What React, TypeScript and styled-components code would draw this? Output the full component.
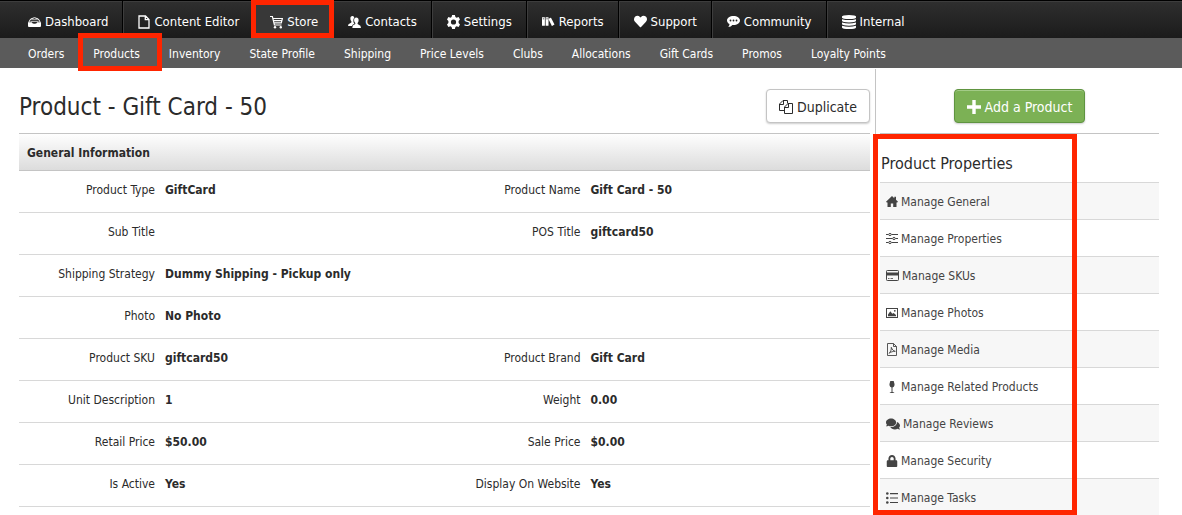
import React from 'react';
import styled, { createGlobalStyle, css } from 'styled-components';
import { FaHeart, FaComments, FaLock } from 'react-icons/fa';
import { ImBooks } from 'react-icons/im';

const Global = createGlobalStyle`
  * { box-sizing: border-box; }
  html, body { margin: 0; padding: 0; }
  body {
    background: #fff;
    color: #2b2b2b;
    font-family: Tahoma, "DejaVu Sans Condensed", "DejaVu Sans", sans-serif;
    font-stretch: condensed;
    font-size: 12px;
    line-height: 18px;
  }
  a { color: inherit; text-decoration: none; }
  svg { display: block; flex: none; }
`;

const RED = '#ff2500';

const marked = css`
  position: relative;
  z-index: 2;
  &::after {
    content: '';
    position: absolute;
    border: 5px solid ${RED};
    pointer-events: none;
  }
`;

const MainNav = styled.nav`
  display: flex;
  height: 38px;
  padding-left: 13px;
  border-top: 1px solid #000;
  background: linear-gradient(#2f2f2f, #1b1b1b);
  box-shadow: inset 0 1px #3d3d3d;
`;

const MainLink = styled.a<{ $active?: boolean }>`
  display: flex;
  align-items: center;
  gap: 4px;
  padding: 4px 14px 0 15px;
  color: #fff;
  font-size: 13px;
  white-space: nowrap;
  border-right: 1px solid #000;
  box-shadow: 1px 0 #3d3d3d;
  &:last-child { border-right: 0; box-shadow: none; }
  ${p => p.$active && css`
    ${marked}
    background: #383838;
    &::after { inset: -1px -2px 0 -3px; }
  `}
`;

const SubNav = styled.nav`
  display: flex;
  height: 30px;
  padding-left: 13px;
  background: #5b5b5b;
`;

const SubLink = styled.a<{ $active?: boolean }>`
  display: flex;
  align-items: center;
  padding: 2px 14px 0 15px;
  color: #fff;
  white-space: nowrap;
  ${p => p.$active && css`
    ${marked}
    &::after { inset: -5px -8px -3px 0; }
  `}
`;

const Page = styled.div`
  display: grid;
  grid-template-columns: minmax(0, 1fr) 284px;
  column-gap: 5px;
  padding: 1px 23px 0 19px;
`;

const Main = styled.main``;

const TitleBar = styled.header`
  display: flex;
  align-items: center;
  justify-content: space-between;
  height: 64px;
  padding-top: 10px;
`;

const Title = styled.h1`
  margin: 0;
  padding-top: 2px;
  font-size: 24px;
  line-height: 32px;
  font-weight: 400;
`;

const Button = styled.button<{ $primary?: boolean }>`
  display: flex;
  align-items: center;
  gap: 4px;
  height: 34px;
  padding: 2px 12px 0;
  border: 1px solid #c4c4c4;
  border-radius: 4px;
  background: #fff;
  color: #2b2b2b;
  font: inherit;
  font-size: 14px;
  box-shadow: 0 1px 2px rgba(0, 0, 0, 0.2);
  ${p => p.$primary && css`
    border-color: #5f9440;
    background: #7cb155;
    color: #fff;
    box-shadow: inset 0 1px #a3cb87, 0 1px 2px rgba(0, 0, 0, 0.2);
  `}
`;

const SectionTitle = styled.h2`
  margin: 0;
  padding: 10px 8px 8px;
  border: solid #c4c4c4;
  border-width: 1px 0;
  background: linear-gradient(#fefefe, #dcdcdc);
  font-size: 12px;
  line-height: 18px;
  font-weight: 700;
`;

const Details = styled.dl`
  margin: 0;
`;

const DetailRow = styled.div`
  display: grid;
  grid-template-columns: 1fr 1fr;
  height: 42px;
  border-bottom: 1px solid #d8d8d8;
`;

const Field = styled.div`
  display: flex;
  gap: 10px;
  padding-top: 10px;
`;

const Label = styled.dt`
  width: 136px;
  text-align: right;
`;

const Value = styled.dd`
  margin: 0;
  font-weight: 700;
`;

const Side = styled.aside`
  border-left: 1px solid #c4c4c4;
  padding-left: 4px;
`;

const SideTop = styled.div`
  display: flex;
  align-items: center;
  justify-content: center;
  height: 65px;
  padding-top: 9px;
  border-bottom: 1px solid #c4c4c4;
`;

const Properties = styled.section`
  ${marked}
  &::after { inset: 0 82px 0 -7px; }
`;

const SideTitle = styled.h2`
  margin: 0;
  padding: 20px 0 8px 1px;
  font-size: 16px;
  line-height: 20px;
  font-weight: 400;
`;

const SideList = styled.ul`
  margin: 0;
  padding: 0;
  list-style: none;
`;

const SideItem = styled.li`
  border-top: 1px solid #d8d8d8;
  &:nth-child(odd) { background: #f7f7f7; }
`;

const SideLink = styled.a`
  display: flex;
  align-items: center;
  gap: 3px;
  height: 36px;
  padding: 1px 6px 0;
  color: #444;
`;

const DashboardIcon = () => (
  <svg width="13" height="10" viewBox="0 0 13 10" fill="none" stroke="currentColor">
    <path d="M.8 5.200 2.600 2Q6.500-.6 10.400 2l1.800 3.200" />
    <path d="M2.400 4.500h8.200M3.200 2.700h6.600" strokeWidth=".8" opacity=".8" />
    <path d="M0 5.200h3.800q.6 1.600 2.700 1.600t2.700-1.600H13V9q0 1-1 1H1Q0 10 0 9Z" fill="currentColor" stroke="none" />
  </svg>
);

const PageIcon = () => (
  <svg width="12" height="14" viewBox="0 0 12 14" fill="none" stroke="currentColor" strokeWidth="1.300">
    <path d="M1 1h6.500L11 4.500V13H1ZM7.300 1v3.700H11" />
  </svg>
);

const CartIcon = () => (
  <svg width="14" height="14" viewBox="0 0 14 14" fill="none" stroke="currentColor" strokeWidth="1.200">
    <path d="M1 1.500h2.400L5.400 10H12.500M4 3.500h9.400L12.300 7.800H5M4.500 5.600h8.200" />
    <circle cx="6" cy="12.300" r="1.200" fill="currentColor" stroke="none" />
    <circle cx="11.800" cy="12.300" r="1.200" fill="currentColor" stroke="none" />
  </svg>
);

const ContactsIcon = () => (
  <svg width="13" height="12" viewBox="0 0 13 12" fill="currentColor">
    <path d="M4.500 0C3 0 2.300 1 2.400 2.700c0 1.300.5 2 1 2.600v1.200L.5 8.200 0 10h4l.6-1.300 1.800-1c-.8-1-1.100-2-1-3.300 0-1.300.3-2 .9-2.700C6 .5 5.300 0 4.500 0Z" />
    <path d="M8.300 1.600c-1.500 0-2.200 1-2.200 2.500 0 1.300.5 2.300 1.200 2.800v1.200L4.800 9.500 4.300 12H13l-.6-2.300-2.800-1.600V6.900c.7-.6 1-1.500 1-2.800 0-1.500-.8-2.500-2.300-2.500Z" />
  </svg>
);

const GearIcon = () => (
  <svg width="13" height="14" viewBox="0 0 13 14" fill="currentColor">
    <path fillRule="evenodd" d="M5.100 0h2.800l.5 2 1.200.7 2-.6L13 4.500 11.600 6v2L13 9.500l-1.400 2.400-2-.6-1.200.7-.5 2H5.100l-.5-2-1.200-.7-2 .6L0 9.500 1.400 8V6L0 4.500l1.400-2.400 2 .6L4.600 2ZM6.500 4.400a2.600 2.600 0 1 0 0 5.200 2.600 2.600 0 1 0 0-5.200Z" />
  </svg>
);

const CommunityIcon = () => (
  <svg width="13" height="12" viewBox="0 0 13 12">
    <path fill="currentColor" d="M6.500 0C2.900 0 0 1.900 0 4.500c0 1.500 1 2.800 2.500 3.600 0 1-.4 2-1.200 2.900 1.800-.2 3.200-1 4-2.100l1.200.1C10.100 9 13 7.100 13 4.500S10.100 0 6.500 0Z" />
    <g fill="#242424"><circle cx="3.500" cy="4.500" r=".9" /><circle cx="6.500" cy="4.500" r=".9" /><circle cx="9.500" cy="4.500" r=".9" /></g>
  </svg>
);

const DatabaseIcon = () => (
  <svg width="14" height="14" viewBox="0 0 14 14" fill="currentColor">
    <path d="M0 1.600Q0 0 7 0t7 1.600V2.800Q13.500 4 7 4T0 2.800ZM0 4.200q7 1.800 14 0V6q-.5 1.400-7 1.400T0 6ZM0 7.500q7 1.800 14 0v1.800q-.5 1.400-7 1.400T0 9.300ZM0 10.800q7 1.800 14 0v1.600Q13.500 14 7 14T0 12.400Z" />
  </svg>
);

const PlusIcon = () => (
  <svg width="14" height="14" viewBox="0 0 14 14" fill="currentColor">
    <path d="M5.300 0h3.400v5.300H14v3.400H8.700V14H5.300V8.700H0V5.300h5.300Z" />
  </svg>
);

const CopyIcon = () => (
  <svg width="14" height="14" viewBox="0 0 14 14" fill="none" stroke="currentColor">
    <path d="M5 10.500H.5V4L4 .5h4.500V3.500M.5 4.500h4V.5" />
    <path d="M5.500 13.500h8v-10H9L5.500 7ZM5.500 7.500h4v-4" />
  </svg>
);

const HomeIcon = () => (
  <svg width="12" height="11" viewBox="0 0 12 11" fill="currentColor">
    <path d="M6 0 8.300 2.200V.8h1.700v3l2 2-.8.800H10.500V11H7.200V7.500H4.800V11H1.500V6.600H.8L0 5.800Z" />
  </svg>
);

const SlidersIcon = () => (
  <svg width="12" height="12" viewBox="0 0 12 12" fill="none" stroke="currentColor">
    <path d="M0 1.500h2.500M5.500 1.500H12M0 5.500h6.500M9.500 5.500H12M0 9.500h2.500M5.500 9.500H12" />
    <circle cx="4" cy="1.500" r="1.200" /><circle cx="8" cy="5.500" r="1.200" /><circle cx="4" cy="9.500" r="1.200" />
  </svg>
);

const CardIcon = () => (
  <svg width="13" height="11" viewBox="0 0 13 11" fill="none" stroke="currentColor">
    <rect x=".5" y=".5" width="12" height="10" rx=".8" />
    <path d="M0 4h13" strokeWidth="3" />
    <path d="M2 8.500h1.500M4.500 8.500H7" strokeWidth=".8" />
  </svg>
);

const PhotoIcon = () => (
  <svg width="12" height="10" viewBox="0 0 12 10" fill="none" stroke="currentColor">
    <rect x=".5" y=".5" width="11" height="9" />
    <path d="M2 8.200V6.500L4.300 3.200l2 2.500L7.700 5 10 7v1.200Z" fill="currentColor" stroke="none" />
    <circle cx="8.800" cy="2.800" r=".9" fill="currentColor" stroke="none" />
  </svg>
);

const PdfIcon = () => (
  <svg width="12" height="13" viewBox="0 0 12 13" fill="none" stroke="currentColor" strokeWidth=".9">
    <path d="M1.500.5h6L10.500 3.500v9h-9ZM7.500.5v3h3" />
    <path d="M3 10.300C4.500 9.300 5.600 6.500 5.300 4.300c1 2.500 2 3.700 4 4-2 0-4.500.5-6.300 2Z" />
  </svg>
);

const GlassIcon = () => (
  <svg width="12" height="12" viewBox="0 0 12 12" fill="currentColor">
    <path d="M4.300 0h3.400q1 3 .8 4.300Q8.200 6.200 6.500 6.600V11l1.700.4v.6H3.800v-.6l1.700-.4V6.600Q3.800 6.200 3.500 4.300 3.300 3 4.300 0Z" />
  </svg>
);

const TasksIcon = () => (
  <svg width="12" height="12" viewBox="0 0 12 12" fill="currentColor">
    <circle cx="1.300" cy="1.500" r="1.300" /><circle cx="1.300" cy="6" r="1.300" /><circle cx="1.300" cy="10.500" r="1.300" />
    <path d="M4 1h8v1.200H4ZM4 5.400h8v1.200H4ZM4 9.900h8v1.200H4Z" />
  </svg>
);

const mainLinks = [
  { name: 'Dashboard', icon: <DashboardIcon /> },
  { name: 'Content Editor', icon: <PageIcon /> },
  { name: 'Store', icon: <CartIcon />, active: true },
  { name: 'Contacts', icon: <ContactsIcon /> },
  { name: 'Settings', icon: <GearIcon /> },
  { name: 'Reports', icon: <ImBooks size={13} /> },
  { name: 'Support', icon: <FaHeart size={13} /> },
  { name: 'Community', icon: <CommunityIcon /> },
  { name: 'Internal', icon: <DatabaseIcon /> },
];

const subLinks = ['Orders', 'Products', 'Inventory', 'State Profile', 'Shipping', 'Price Levels', 'Clubs', 'Allocations', 'Gift Cards', 'Promos', 'Loyalty Points'];

const rows: [string, string][][] = [
  [['Product Type', 'GiftCard'], ['Product Name', 'Gift Card - 50']],
  [['Sub Title', ''], ['POS Title', 'giftcard50']],
  [['Shipping Strategy', 'Dummy Shipping - Pickup only']],
  [['Photo', 'No Photo']],
  [['Product SKU', 'giftcard50'], ['Product Brand', 'Gift Card']],
  [['Unit Description', '1'], ['Weight', '0.00']],
  [['Retail Price', '$50.00'], ['Sale Price', '$0.00']],
  [['Is Active', 'Yes'], ['Display On Website', 'Yes']],
];

const properties = [
  { name: 'Manage General', icon: <HomeIcon /> },
  { name: 'Manage Properties', icon: <SlidersIcon /> },
  { name: 'Manage SKUs', icon: <CardIcon /> },
  { name: 'Manage Photos', icon: <PhotoIcon /> },
  { name: 'Manage Media', icon: <PdfIcon /> },
  { name: 'Manage Related Products', icon: <GlassIcon /> },
  { name: 'Manage Reviews', icon: <FaComments size={14} /> },
  { name: 'Manage Security', icon: <FaLock size={12} /> },
  { name: 'Manage Tasks', icon: <TasksIcon /> },
];

export default function App() {
  return (
    <>
      <Global />
      <MainNav>
        {mainLinks.map(l => (
          <MainLink key={l.name} href="#" $active={l.active}>{l.icon}<span>{l.name}</span></MainLink>
        ))}
      </MainNav>
      <SubNav>
        {subLinks.map(l => <SubLink key={l} href="#" $active={l === 'Products'}>{l}</SubLink>)}
      </SubNav>
      <Page>
        <Main>
          <TitleBar>
            <Title>Product - Gift Card - 50</Title>
            <Button type="button"><CopyIcon />Duplicate</Button>
          </TitleBar>
          <SectionTitle>General Information</SectionTitle>
          <Details>
            {rows.map((row, i) => (
              <DetailRow key={i}>
                {row.map(([label, value]) => (
                  <Field key={label}><Label>{label}</Label><Value>{value}</Value></Field>
                ))}
              </DetailRow>
            ))}
          </Details>
        </Main>
        <Side>
          <SideTop>
            <Button type="button" $primary><PlusIcon />Add a Product</Button>
          </SideTop>
          <Properties>
            <SideTitle>Product Properties</SideTitle>
            <SideList>
              {properties.map(p => (
                <SideItem key={p.name}><SideLink href="#">{p.icon}{p.name}</SideLink></SideItem>
              ))}
            </SideList>
          </Properties>
        </Side>
      </Page>
    </>
  );
}
